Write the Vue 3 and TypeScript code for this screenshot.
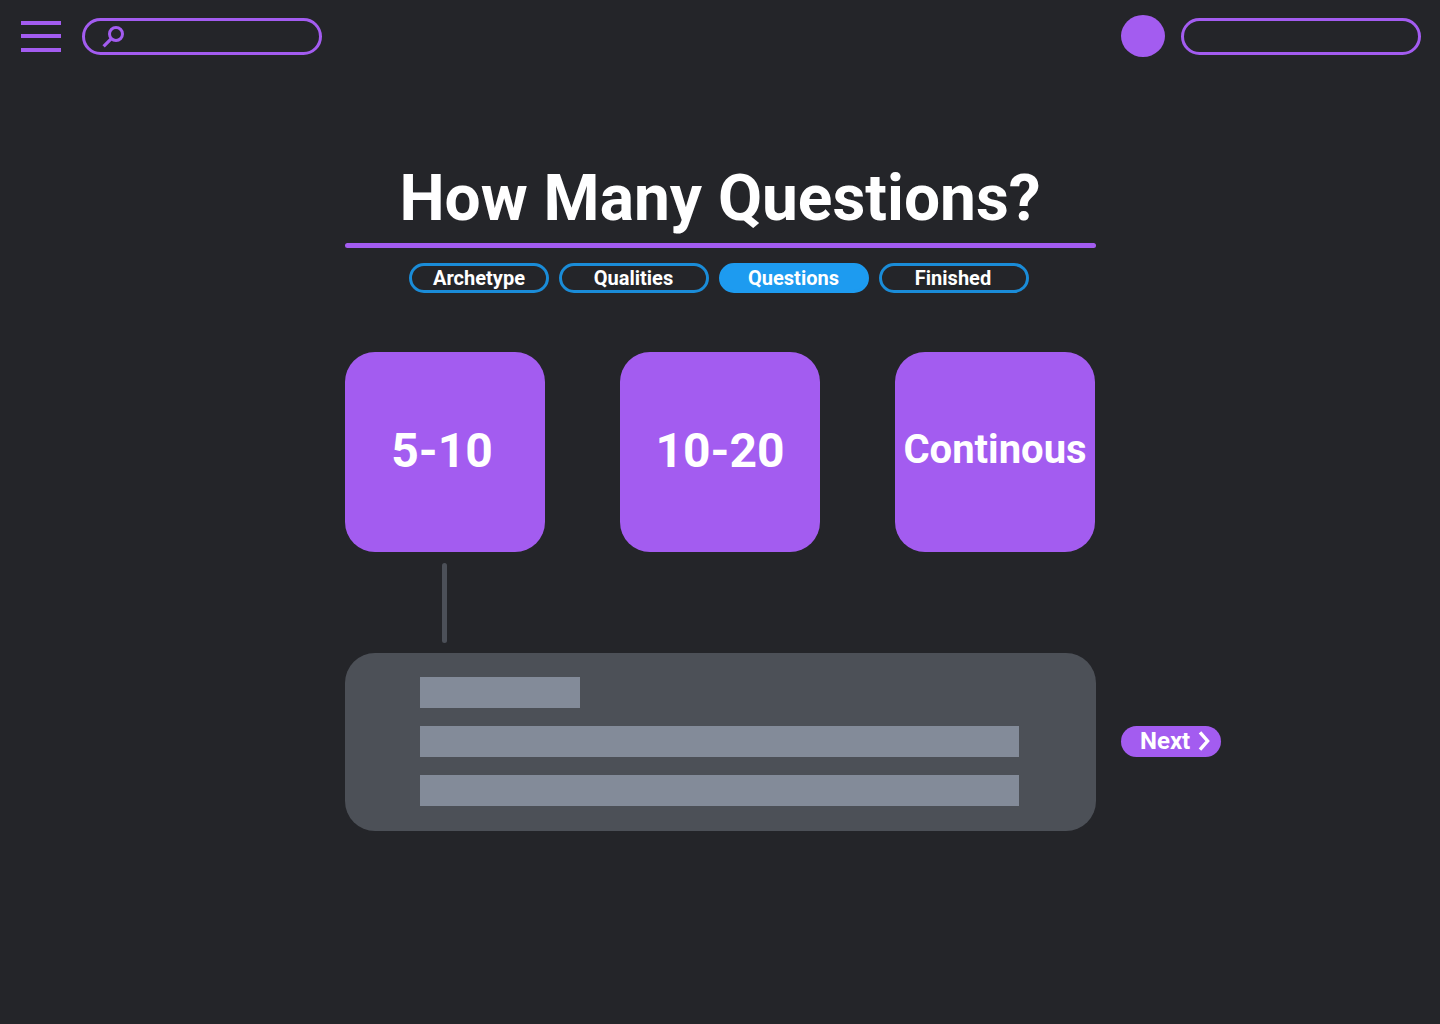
<template>
    <div class="page">
        <header class="topbar">
            <button class="menu-btn" aria-label="Menu">
                <svg width="40" height="31" viewBox="0 0 40 31">
                    <path d="M0 2h40M0 15h40M0 29h40" stroke="currentColor" stroke-width="4" />
                </svg>
            </button>
            <div class="pill search">
                <svg width="24" height="24" viewBox="0 0 24 24" fill="none" stroke="currentColor">
                    <circle cx="14" cy="9" r="6.5" stroke-width="3" />
                    <path d="M9.6 13.4L1.6 21.4" stroke-width="3.2" />
                </svg>
            </div>
            <div class="avatar"></div>
            <div class="pill"></div>
        </header>

        <main class="content">
            <h1 class="title">How Many Questions?</h1>
            <div class="divider"></div>

            <nav class="steps">
                <button
                    v-for="step in steps"
                    :key="step"
                    class="step"
                    :class="{ active: step === currentStep }"
                >
                    {{ step }}
                </button>
            </nav>

            <div class="options">
                <button
                    v-for="option in options"
                    :key="option.label"
                    class="option"
                    :class="{ small: option.small }"
                    @click="selected = option.label"
                >
                    <span>{{ option.label }}</span>
                </button>
            </div>

            <div class="connector"></div>

            <div class="details-row">
                <section class="details">
                    <div class="line short"></div>
                    <div class="line"></div>
                    <div class="line"></div>
                </section>
                <button class="next-btn">
                    <span>Next</span>
                    <svg width="12" height="20" viewBox="0 0 12 20" fill="none" stroke="currentColor">
                        <path d="M2 1.3L9.6 10L2 18.7" stroke-width="3.4" />
                    </svg>
                </button>
            </div>
        </main>
    </div>
</template>

<script setup lang="ts">
import { ref } from 'vue';

interface Option {
    label: string;
    small?: boolean;
}

const steps = ['Archetype', 'Qualities', 'Questions', 'Finished'];
const currentStep = ref('Questions');

const options: Option[] = [
    { label: '5-10' },
    { label: '10-20' },
    { label: 'Continous', small: true },
];
const selected = ref('5-10');
</script>

<style>
body {
    margin: 0;
    background: #242529;
}
</style>

<style scoped>
.page {
    min-height: 1024px;
    background: #242529;
    color: #fff;
    font-family: Roboto, sans-serif;
}

button {
    border: none;
    padding: 0;
    background: none;
    color: inherit;
    font-family: inherit;
    font-weight: 700;
    cursor: pointer;
}

svg {
    display: block;
}

.topbar {
    display: flex;
    align-items: center;
    box-sizing: border-box;
    height: 73px;
    padding: 0 19px 0 21px;
    color: #a35cf0;
}

.menu-btn {
    color: #a35cf0;
}

.pill {
    box-sizing: border-box;
    width: 240px;
    height: 37px;
    border: 3px solid #a35cf0;
    border-radius: 20px;
}

.search {
    margin-left: 21px;
    padding: 4px 0 0 17px;
}

.avatar {
    width: 44px;
    height: 42px;
    margin: 0 16px 1px auto;
    border-radius: 50%;
    background: #a35cf0;
}

.content {
    width: 751px;
    margin-left: 345px;
    padding-top: 88px;
}

.title {
    margin: 0;
    padding-right: 1px;
    font-size: 64px;
    font-weight: 700;
    line-height: 75px;
    text-align: center;
    white-space: nowrap;
}

.divider {
    height: 5px;
    margin-top: 7px;
    border-radius: 3px;
    background: #a35cf0;
}

.steps {
    display: flex;
    gap: 10px;
    margin: 15px 0 0 64px;
}

.step {
    box-sizing: border-box;
    width: 150px;
    height: 30px;
    padding-right: 1px;
    border: 3px solid #1a8cd8;
    border-radius: 15px;
    font-size: 20px;
    line-height: 24px;
}

.step:first-child {
    width: 140px;
    padding-right: 0;
}

.step:last-child {
    padding-right: 2px;
}

.step.active {
    border-color: #1d9bf0;
    background: #1d9bf0;
}

.options {
    display: flex;
    gap: 75px;
    margin-top: 59px;
}

.option {
    width: 200px;
    height: 200px;
    padding-bottom: 2px;
    border-radius: 30px;
    background: #a35cf0;
    font-size: 48px;
    line-height: 56px;
}

.option:first-child {
    padding-right: 6px;
}

.option.small {
    font-size: 40px;
    padding-bottom: 4px;
    white-space: nowrap;
}

.connector {
    width: 5px;
    height: 80px;
    margin: 11px 0 10px 97px;
    border-radius: 3px;
    background: #4c5058;
}

.details-row {
    display: flex;
    align-items: center;
    gap: 25px;
}

.details {
    display: flex;
    flex-direction: column;
    flex-shrink: 0;
    gap: 18px;
    box-sizing: border-box;
    width: 751px;
    height: 178px;
    padding: 24px 77px 0 75px;
    border-radius: 30px;
    background: #4c5057;
}

.line {
    height: 31px;
    background: #838b99;
}

.line.short {
    width: 160px;
}

.next-btn {
    display: flex;
    align-items: center;
    flex-shrink: 0;
    gap: 8px;
    box-sizing: border-box;
    width: 100px;
    height: 31px;
    margin-bottom: 1px;
    padding: 0 0 1px 19px;
    border-radius: 16px;
    background: #a35cf0;
    font-size: 24px;
    line-height: 28px;
}
</style>
